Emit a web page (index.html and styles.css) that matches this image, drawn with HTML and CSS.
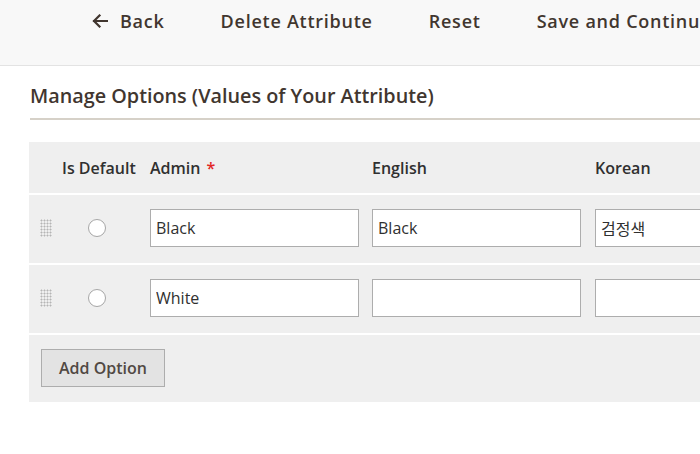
FILE: index.html
```html
<!DOCTYPE html>
<html lang="en">
<head>
<meta charset="utf-8">
<title>Manage Options</title>
<link rel="stylesheet" href="styles.css">
</head>
<body>
<header class="actions">
  <button class="action back" type="button">
    <svg class="back-icon" width="16" height="14" viewBox="0 0 16 14" aria-hidden="true">
      <path d="M15 7H2M7.5 1.5L2 7l5.5 5.5" fill="none" stroke="#41362f" stroke-width="2.2" stroke-linecap="square"/>
    </svg>
    <span>Back</span>
  </button>
  <button class="action" type="button">Delete Attribute</button>
  <button class="action" type="button">Reset</button>
  <button class="action" type="button">Save and Continue Edit</button>
</header>
<main class="content">
  <h2 class="legend">Manage Options (Values of Your Attribute)</h2>
  <div class="options">
    <div class="row head">
      <div class="cell"></div>
      <div class="cell th">Is Default</div>
      <div class="cell th">Admin <span class="req">*</span></div>
      <div class="cell th">English</div>
      <div class="cell th">Korean</div>
    </div>
    <div class="row">
      <div class="cell"><span class="handle"></span></div>
      <div class="cell"><input class="radio" type="radio" name="default"></div>
      <div class="cell"><input class="text" type="text" value="Black"></div>
      <div class="cell"><input class="text" type="text" value="Black"></div>
      <div class="cell"><input class="text" type="text" value="검정색"></div>
    </div>
    <div class="row">
      <div class="cell"><span class="handle"></span></div>
      <div class="cell"><input class="radio" type="radio" name="default"></div>
      <div class="cell"><input class="text" type="text" value="White"></div>
      <div class="cell"><input class="text" type="text" value=""></div>
      <div class="cell"><input class="text" type="text" value=""></div>
    </div>
    <div class="foot">
      <button class="add" type="button">Add Option</button>
    </div>
  </div>
</main>
</body>
</html>
```
FILE: styles.css
```css
* { box-sizing: border-box; }
html, body { margin: 0; padding: 0; background: #fff; overflow: hidden; }
body {
  font-family: "Open Sans", "Noto Sans CJK KR", sans-serif;
  color: #41362f;
  width: 700px;
  height: 454px;
}
.actions {
  height: 66px;
  background: #f8f8f8;
  border-bottom: 1px solid #e3e3e3;
  display: flex;
  align-items: flex-start;
  gap: 56px;
  padding: 8px 0 0 92px;
  white-space: nowrap;
  overflow: hidden;
}
.action {
  font-family: inherit;
  font-size: 18px;
  font-weight: 600;
  color: #41362f;
  background: none;
  border: 0;
  padding: 0;
  line-height: 26px;
  display: flex;
  align-items: center;
  gap: 12px;
  flex-shrink: 0;
  letter-spacing: 0.75px;
}
.back-icon { display: block; }
.content { padding: 0 0 0 30px; }
.legend {
  margin: 0;
  padding: 16px 0 8px 0;
  font-size: 19.8px;
  font-weight: 600;
  line-height: 28px;
  color: #41362f;
  border-bottom: 2px solid #d6d1c8;
  white-space: nowrap;
}
.options {
  margin: 22px 0 0 -1px;
  width: 760px;
  background: #efefef;
}
.row {
  display: grid;
  grid-template-columns: 33px 88px 222px 223px 194px;
  align-items: center;
  height: 70px;
  padding-bottom: 2px;
  border-top: 2px solid #fff;
}
.row.head {
  height: 51px;
  padding-bottom: 0;
  border-top: 0;
}
.th {
  font-size: 16px;
  font-weight: 600;
  color: #303030;
  white-space: nowrap;
  padding-top: 1px;
}
.req { color: #e22626; margin-left: 2px; }
.handle {
  display: block;
  width: 12px;
  height: 18px;
  margin-left: 11px;
  background-image: radial-gradient(circle, #b5b5b5 0.9px, transparent 1.1px);
  background-size: 3px 3px;
}
.radio {
  appearance: none;
  -webkit-appearance: none;
  margin: 0 0 0 26px;
  width: 18px;
  height: 18px;
  border: 1.5px solid #a6a6a6;
  border-radius: 50%;
  background: #fff;
  display: block;
}
.text {
  display: block;
  width: 209px;
  height: 38px;
  margin: 0;
  border: 1px solid #adadad;
  background: #fff;
  font-family: "Open Sans", "Noto Sans CJK KR", sans-serif;
  font-size: 16px;
  color: #303030;
  padding: 0 5px;
}
.foot {
  border-top: 2px solid #fff;
  padding: 14px 0 15px 12px;
}
.add {
  display: block;
  height: 38px;
  padding: 0 16px;
  width: 124px;
  background: #e3e3e3;
  border: 1px solid #adadad;
  font-family: inherit;
  font-size: 16px;
  font-weight: 600;
  color: #514943;
}
```
